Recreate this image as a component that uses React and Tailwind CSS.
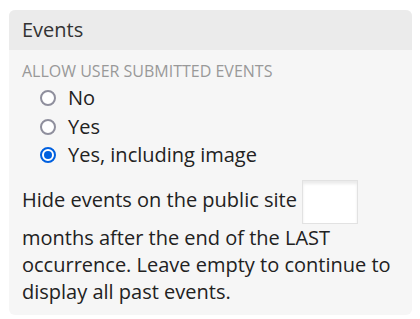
import { useState } from 'react';

const options = [
  { value: 'no', label: 'No' },
  { value: 'yes', label: 'Yes' },
  { value: 'image', label: 'Yes, including image' },
];

function Radio({ checked }) {
  return (
    <span
      className={`w-[16px] h-[16px] rounded-full border-2 bg-white flex items-center justify-center shrink-0 ${
        checked ? 'border-[#0060df]' : 'border-[#8f8f9d]'
      }`}
    >
      {checked && <span className="w-[8px] h-[8px] rounded-full bg-[#0060df]" />}
    </span>
  );
}

export default function App() {
  const [allow, setAllow] = useState('image');
  const [months, setMonths] = useState('');

  return (
    <div className="w-[420px] h-[319px] bg-white pt-[10px] px-[9px] font-['Open_Sans',sans-serif]">
      <div className="w-[403px] h-[305px] rounded-md bg-[#f6f6f6] overflow-hidden">
        {/* Header */}
        <div className="h-[40px] bg-[#ebebeb] px-[13px] flex items-center text-[20px] text-[#333]">
          Events
        </div>

        <div className="px-[13px] pt-[10px]">
          <div className="text-[16px] leading-[22px] text-[#999] uppercase">
            Allow user submitted events
          </div>

          <div className="pl-[18px] mt-[2px] flex flex-col">
            {options.map((o) => (
              <label
                key={o.value}
                onClick={() => setAllow(o.value)}
                className="flex items-center gap-[12px] h-[28.5px] text-[20px] text-[#222] cursor-pointer"
              >
                <Radio checked={allow === o.value} />
                {o.label}
              </label>
            ))}
          </div>

          <p className="mt-[10px] text-[20px] leading-[27px] text-[#222]">
            Hide events on the public site{' '}
            <input
              type="text"
              value={months}
              onChange={(e) => setMonths(e.target.value)}
              className="inline-block align-middle w-[56px] h-[44px] bg-white border border-[#e2e2e2] shadow-[inset_0_3px_3px_rgba(0,0,0,0.08)] outline-none"
            />{' '}
            months after the end of the LAST occurrence. Leave empty to continue to display all past events.
          </p>
        </div>
      </div>
    </div>
  );
}
